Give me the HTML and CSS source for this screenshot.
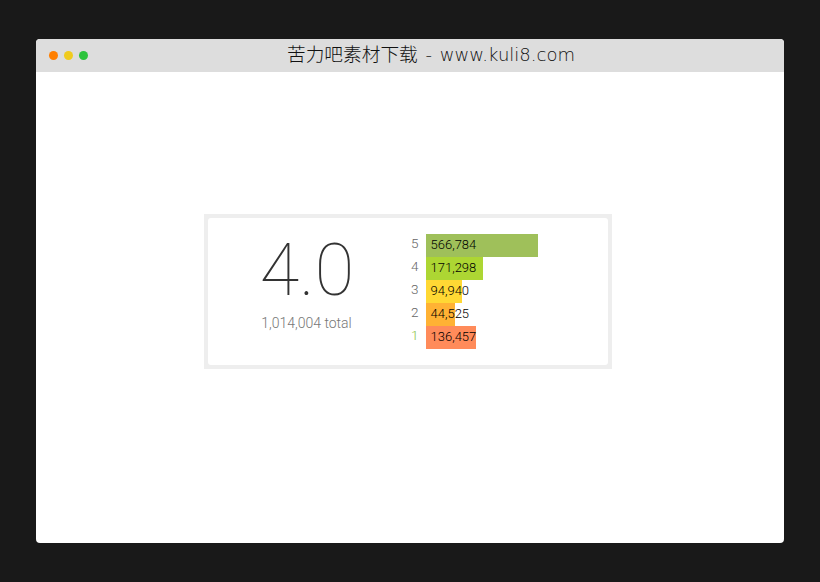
FILE: index.html
```html
<!DOCTYPE html>
<html lang="zh">
<head>
<meta charset="utf-8">
<title>Rating</title>
<link rel="stylesheet" href="styles.css">
</head>
<body>
<div class="window">
  <header class="titlebar">
    <div class="lights">
      <span class="light light-orange"></span>
      <span class="light light-yellow"></span>
      <span class="light light-green"></span>
    </div>
    <h1 class="title"><span class="title-cjk">苦力吧素材下载</span><span class="title-dash">-</span><span class="title-latin">www.kuli8.com</span></h1>
  </header>
  <main class="content">
    <section class="panel">
      <div class="panel-inner">
        <div class="score">
          <div class="score-value">4.0</div>
          <div class="score-total">1,014,004 total</div>
        </div>
        <div class="bars">
          <div class="row"><span class="star">5</span><div class="track"><div class="bar bar-5"></div><span class="count">566,784</span></div></div>
          <div class="row"><span class="star">4</span><div class="track"><div class="bar bar-4"></div><span class="count">171,298</span></div></div>
          <div class="row"><span class="star">3</span><div class="track"><div class="bar bar-3"></div><span class="count">94,940</span></div></div>
          <div class="row"><span class="star">2</span><div class="track"><div class="bar bar-2"></div><span class="count">44,525</span></div></div>
          <div class="row"><span class="star star-low">1</span><div class="track"><div class="bar bar-1"></div><span class="count">136,457</span></div></div>
        </div>
      </div>
    </section>
  </main>
</div>
</body>
</html>
```
FILE: styles.css
```css
* { box-sizing: border-box; }
html, body { margin: 0; height: 100%; }
body {
  background: #191919;
  padding: 39px 36px;
  font-family: Roboto, sans-serif;
}
.window {
  width: 748px;
  height: 504px;
  background: #fff;
  border-radius: 4px;
  overflow: hidden;
  display: flex;
  flex-direction: column;
}
.titlebar {
  height: 33px;
  background: #dddddd;
  display: flex;
  align-items: center;
  position: relative;
  padding-left: 251px;
}
.lights {
  position: absolute;
  left: 13px;
  top: 12px;
  display: flex;
  gap: 6px;
}
.light { width: 9px; height: 9px; border-radius: 50%; }
.light-orange { background: #ff7f00; }
.light-yellow { background: #f0cb1e; }
.light-green { background: #2dc33c; }
.title {
  margin: 0 0 1px;
  display: flex;
  font-family: "DejaVu Sans", "Noto Sans CJK SC", sans-serif;
  font-size: 18px;
  font-weight: 200;
  color: #111;
  line-height: 32px;
  white-space: nowrap;
}
.title-cjk { font-size: 18.7px; }
.title-dash { width: 22px; text-align: center; }
.title-latin { font-size: 18px; }
.content {
  flex: 1;
  display: flex;
  justify-content: center;
  padding: 142px 4px 0 0;
}
.panel {
  width: 408px;
  height: 155px;
  padding: 4px;
  background: #eeeeee;
}
.panel-inner {
  height: 100%;
  background: #fff;
  border-radius: 3px;
  display: flex;
  padding-left: 40px;
}
.score { width: 163px; padding-top: 15px; }
.score-value {
  font-weight: 100;
  font-size: 72px;
  line-height: 76px;
  color: #333;
  width: 118px;
  text-align: center;
}
.score-total {
  font-weight: 300;
  font-size: 14px;
  line-height: 18px;
  color: #777;
  margin-top: 5px;
  width: 117px;
  text-align: center;
}
.bars { padding-top: 16px; display: flex; flex-direction: column; }
.row { display: flex; height: 23px; }
.star {
  width: 15px;
  font-weight: 300;
  font-size: 13.5px;
  line-height: 19px;
  color: #666;
}
.star-low { color: #8bc34a; }
.track { position: relative; height: 23px; width: 160px; }
.bar { height: 23px; }
.bar-5 { width: 112px; background: #9fc05a; }
.bar-4 { width: 57px; background: #add633; }
.bar-3 { width: 36px; background: #ffd834; }
.bar-2 { width: 29px; background: #ffb234; }
.bar-1 { width: 50px; background: #ff8b5a; }
.count {
  position: absolute;
  left: 4.5px;
  top: 0;
  font-size: 13px;
  font-weight: 300;
  line-height: 21px;
  color: #000;
}
```
